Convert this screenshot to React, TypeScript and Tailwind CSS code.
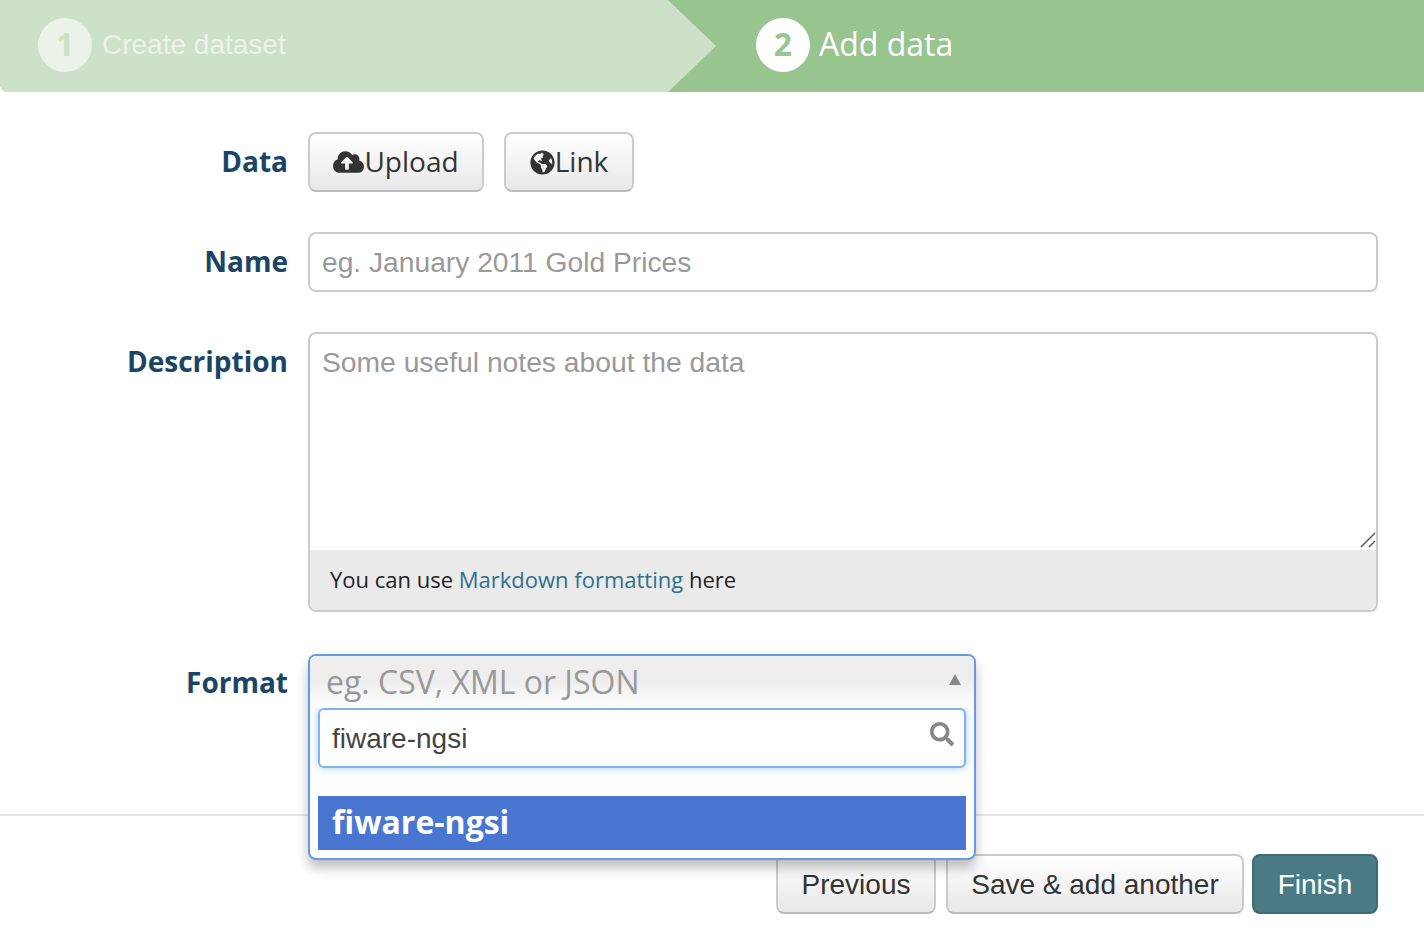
import { FaCloudUploadAlt, FaGlobeAmericas, FaSearch } from "react-icons/fa";

const sans = "font-['Open_Sans',sans-serif]";
const helv = "font-['Liberation_Sans',Arial,sans-serif]";
const labelCls = `w-[288px] shrink-0 text-right text-[28px] font-bold leading-[58px] text-[#1b4565] ${sans}`;
const btnCls =
  "flex h-[60px] items-center justify-center rounded-lg border-2 border-[#cccccc] border-b-[#bbbbbb] bg-gradient-to-b from-white to-[#e8e8e8] text-[#333333]";

export default function App() {
  return (
    <div className="relative min-h-[946px] w-[1424px] overflow-hidden bg-white">
      <div className="flex h-[92px] overflow-hidden rounded-bl-lg bg-[#98c58f]">
        <div className="flex w-[716px] shrink-0 items-center gap-[10px] bg-[#cce1c8] pb-[2px] pl-[38px] [clip-path:polygon(0_0,668px_0,716px_46px,668px_100%,0_100%)]">
          <span className={`flex h-[54px] w-[54px] items-center justify-center rounded-full bg-[#ebf3e9] pb-[2px] text-[32px] font-bold text-[#cce1c8] ${sans}`}>1</span>
          <span className={`text-[28px] font-medium text-[#ebf3e9] ${helv}`}>Create dataset</span>
        </div>
        <div className="flex items-center gap-[9px] pb-[2px] pl-[40px]">
          <span className={`flex h-[54px] w-[54px] items-center justify-center rounded-full bg-white pb-[2px] text-[32px] font-bold text-[#98c58f] ${sans}`}>2</span>
          <span className={`mb-[2px] text-[32px] text-white ${sans}`}>Add data</span>
        </div>
      </div>

      <div className="flex flex-col pt-[40px]">
        <div className="flex gap-[20px]">
          <div className={labelCls}>Data</div>
          <div className="flex gap-[20px]">
            <div className={`${btnCls} w-[176px] pb-[2px] text-[28px] ${sans}`}>
              <FaCloudUploadAlt className="mt-[2px] h-[28px] w-[31px] text-[#333333]" />
              Upload
            </div>
            <div className={`${btnCls} w-[130px] pb-[2px] text-[28px] ${sans}`}>
              <FaGlobeAmericas className="mt-[2px] h-[25px] w-[25px] text-[#333333]" />
              Link
            </div>
          </div>
        </div>

        <div className="mt-[40px] flex gap-[20px]">
          <div className={labelCls}>Name</div>
          <div className={`flex h-[60px] w-[1070px] items-center rounded-lg border-2 border-[#cccccc] pl-[12px] text-[28.2px] text-[#999999] ${helv}`}>
            eg. January 2011 Gold Prices
          </div>
        </div>

        <div className="mt-[40px] flex gap-[20px]">
          <div className={labelCls}>Description</div>
          <div className="relative flex h-[280px] w-[1070px] flex-col overflow-hidden rounded-lg border-2 border-[#cccccc]">
            <div className={`h-[216px] pl-[12px] text-[28.25px] leading-[56px] text-[#999999] ${helv}`}>
              Some useful notes about the data
            </div>
            <svg className="absolute right-0 top-[198px]" width="16" height="16" viewBox="0 0 16 16" fill="none" stroke="#555555" strokeWidth="1.4">
              <path d="M1 15 L15 1" />
              <path d="M9 15 L15 9" />
            </svg>
            <div className={`flex flex-1 items-center bg-[#eaeaea] pb-[2px] pl-[20px] text-[22px] text-[#222222] ${sans}`}>
              <span>
                You can use <span className="text-[#2f7090]">Markdown formatting</span> here
              </span>
            </div>
          </div>
        </div>

        <div className="mt-[41px] flex gap-[20px]">
          <div className={labelCls}>Format</div>
        </div>
      </div>

      <div className="mt-[103px] border-t-2 border-[#e6e6e6]" />

      <div className="mt-[38px] flex justify-end pr-[46px]">
        <div className={`${btnCls} mr-[10px] w-[160px] pt-[2px] text-[28px] ${helv}`}>Previous</div>
        <div className={`${btnCls} mr-[8px] w-[298px] pt-[2px] text-[28px] ${helv}`}>Save &amp; add another</div>
        <div className={`flex h-[60px] w-[126px] items-center justify-center rounded-lg border-2 border-[#3f6c74] bg-[#4a7b84] pt-[2px] text-[28px] text-white ${helv}`}>Finish</div>
      </div>

      {/* open select dropdown sits over the form */}
      <div className="absolute left-[308px] top-[654px] z-10 h-[206px] w-[668px] overflow-hidden rounded-lg border-2 border-[#6699ee] bg-white shadow-[0_8px_12px_rgba(0,0,0,0.25)]">
        <div className="relative h-[52px] bg-gradient-to-b from-[#eeeeee] via-[#eeeeee] to-white">
          <span className={`absolute left-[16px] top-[3px] text-[32px] leading-[46px] text-[#999999] ${sans}`}>eg. CSV, XML or JSON</span>
          <span className="absolute right-[13px] top-[18px] h-0 w-0 border-x-[6px] border-b-[11px] border-x-transparent border-b-[#888888]" />
        </div>
        <div className="mx-[8px] flex h-[60px] items-center justify-between rounded-md border-2 border-[#7fb2ee] bg-white pl-[12px] pr-[10px] shadow-[0_0_8px_rgba(102,175,233,0.6)]">
          <span className={`pt-[2px] text-[28px] text-[#444444] ${helv}`}>fiware-ngsi</span>
          <FaSearch className="mb-[8px] h-[24px] w-[24px] text-[#888888]" />
        </div>
        <div className={`mx-[8px] mt-[28px] flex h-[54px] items-center bg-[#4876d0] pb-[2px] pl-[14px] text-[32px] font-bold text-white ${sans}`}>
          fiware-ngsi
        </div>
      </div>
    </div>
  );
}
